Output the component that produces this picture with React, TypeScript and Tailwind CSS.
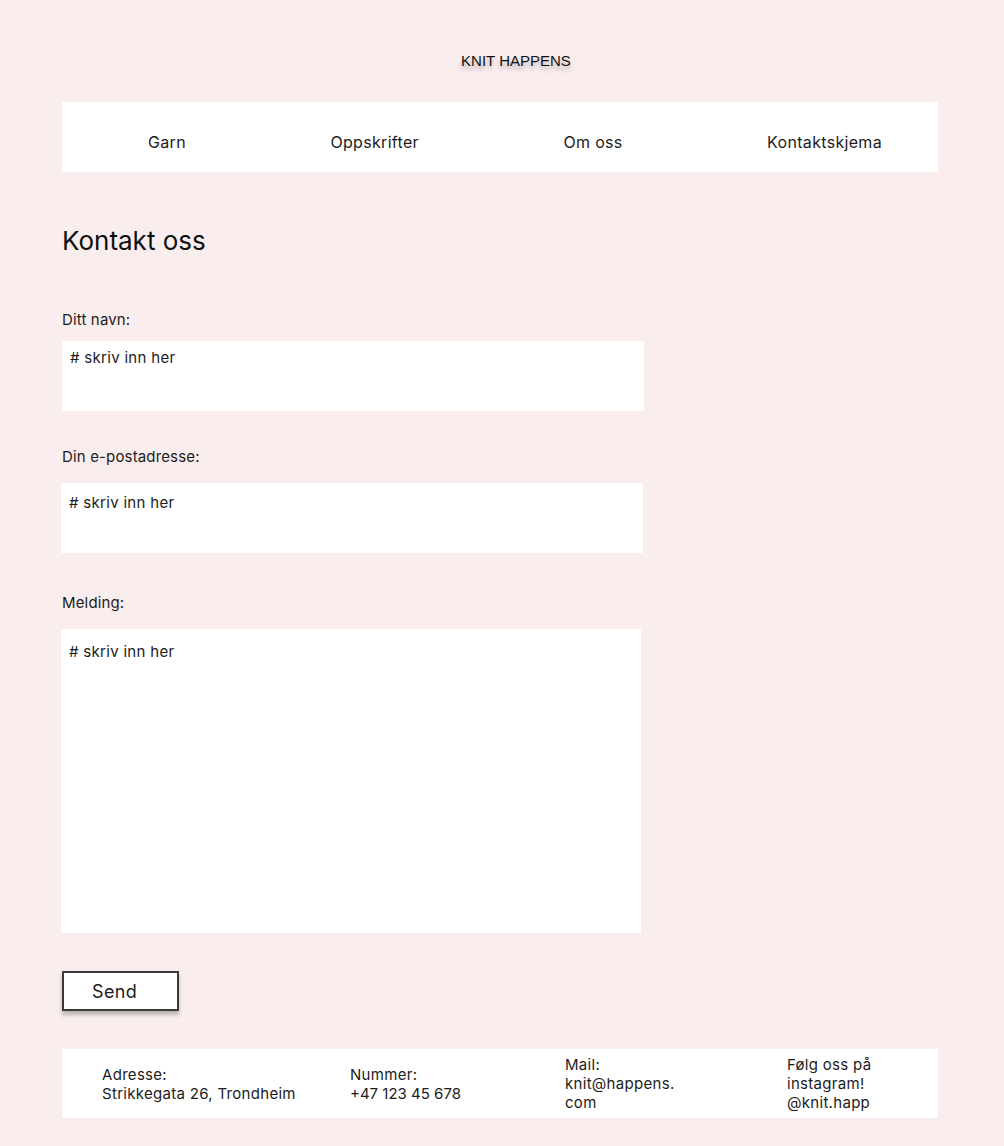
const navItems = ["Garn", "Oppskrifter", "Om oss", "Kontaktskjema"];

function Field({
  label,
  box,
  labelGap,
  topGap,
}: {
  label: string;
  box: string;
  labelGap: string;
  topGap: string;
}) {
  return (
    <div className={topGap}>
      <label className="block text-[15px] leading-5 tracking-[0.01em] text-[#1c1c1c]">{label}</label>
      <textarea
        placeholder="# skriv inn her"
        className={`${labelGap} ${box} block resize-none bg-white px-2 text-[15px] leading-5 tracking-[0.02em] text-[#1c1c1c] outline-none placeholder:text-[#1c1c1c]`}
      />
    </div>
  );
}

export default function App() {
  return (
    <div
      className="min-h-[1146px] bg-[#f9eeed] pt-[52px] pb-[28px]"
      style={{ fontFamily: "Inter, 'Noto Sans', sans-serif" }}
    >
      <div className="mx-[62px] w-[876px]">
        <h1
          className="pl-[32px] text-center text-[15px] leading-[18px] text-[#111] [text-shadow:0_4px_4px_rgba(0,0,0,0.25)]"
          style={{ fontFamily: "'Liberation Sans', Arial, sans-serif" }}
        >
          KNIT HAPPENS
        </h1>

        {/* nav */}
        <nav className="mt-[32px] flex h-[70px] items-center justify-between bg-white pt-[10px] pl-[86px] pr-[56px]">
          {navItems.map((item) => (
            <a key={item} className="text-[16px] leading-5 tracking-[0.02em] text-[#1c1c1c]">
              {item}
            </a>
          ))}
        </nav>

        <h2 className="mt-[54px] text-[26px] leading-[30px] text-[#111]">Kontakt oss</h2>

        <form>
          <Field label="Ditt navn:" topGap="mt-[54px]" labelGap="mt-[11px]" box="h-[70px] w-[582px] pt-[7px]" />
          <Field label="Din e-postadresse:" topGap="mt-[36px]" labelGap="mt-[16px] -ml-px" box="h-[70px] w-[582px] pt-[10px]" />
          <Field label="Melding:" topGap="mt-[40px]" labelGap="mt-[16px] -ml-px" box="h-[304px] w-[580px] pt-[13px]" />

          <button
            type="button"
            className="mt-[38px] block h-[40px] w-[117px] border-2 border-[#3a3a3a] bg-white pl-[28px] text-left text-[18px] tracking-[0.02em] text-[#1c1c1c] shadow-[0_4px_4px_rgba(0,0,0,0.25)]"
          >
            Send
          </button>
        </form>

        {/* footer */}
        <footer className="mt-[38px] flex h-[69px] items-center bg-white pl-[40px] text-[15px] leading-[19px] tracking-[0.02em] text-[#1c1c1c]">
          <div className="w-[248px]">
            <p>Adresse:</p>
            <p>Strikkegata 26, Trondheim</p>
          </div>
          <div className="w-[215px]">
            <p>Nummer:</p>
            <p className="tracking-normal">+47 123 45 678</p>
          </div>
          <div className="w-[222px]">
            <p>Mail:</p>
            <p>
              knit@happens.
              <br />
              com
            </p>
          </div>
          <div className="w-[110px]">
            <p>Følg oss på</p>
            <p>instagram!</p>
            <p>@knit.happ</p>
          </div>
        </footer>
      </div>
    </div>
  );
}
